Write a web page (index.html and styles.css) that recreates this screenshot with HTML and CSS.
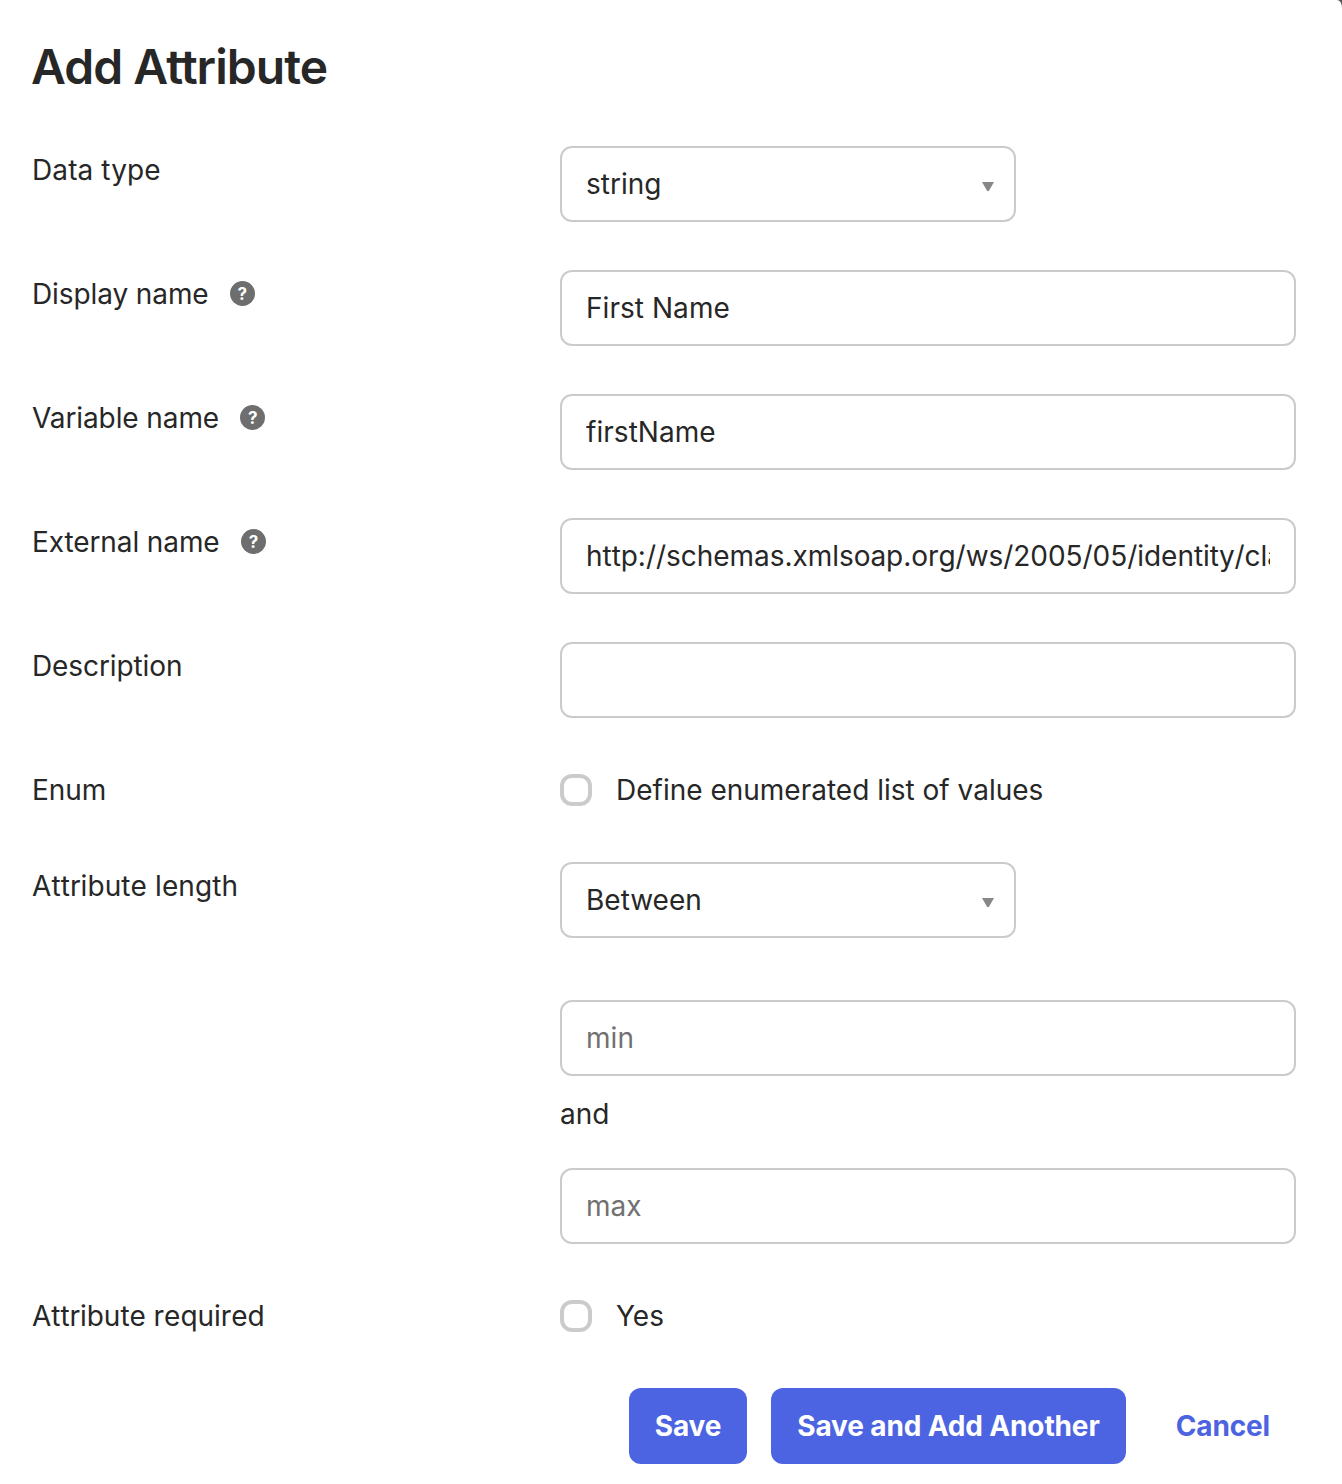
FILE: index.html
```html
<!DOCTYPE html>
<html lang="en">
<head>
<meta charset="utf-8">
<title>Add Attribute</title>
<link rel="stylesheet" href="styles.css">
</head>
<body>
<main class="dialog">
  <h1 class="title">Add Attribute</h1>
  <form class="form">
    <div class="row"><div class="label"><span class="loose">Data type</span></div><div class="select"><span>string</span><svg class="arrow" viewBox="0 0 12 9"><path d="M0 0h12L6.8 9H5.2z"/></svg></div></div>
    <div class="row"><div class="label">Display name <span class="help">?</span></div><input class="input" type="text" value="First Name"></div>
    <div class="row"><div class="label">Variable name <span class="help">?</span></div><input class="input" type="text" value="firstName"></div>
    <div class="row"><div class="label">External name <span class="help">?</span></div><input class="input url" type="text" value="http://schemas.xmlsoap.org/ws/2005/05/identity/claims/givenname"></div>
    <div class="row"><div class="label">Description</div><input class="input" type="text"></div>
    <div class="row"><div class="label">Enum</div><label class="check"><input class="box" type="checkbox"><span>Define enumerated list of values</span></label></div>
    <div class="row row-length"><div class="label"><span class="unkerned loose">Attribute length</span></div><div class="select"><span>Between</span><svg class="arrow" viewBox="0 0 12 9"><path d="M0 0h12L6.8 9H5.2z"/></svg></div></div>
    <div class="range"><input class="input" type="text" placeholder="min"><div class="and">and</div><input class="input" type="text" placeholder="max"></div>
    <div class="row"><div class="label"><span class="unkerned">Attribute required</span></div><label class="check"><input class="box" type="checkbox"><span>Yes</span></label></div>
    <div class="actions"><button class="button" type="button">Save</button><button class="button" type="button">Save and Add Another</button><button class="button link" type="button">Cancel</button></div>
  </form>
</main>
</body>
</html>
```
FILE: styles.css
```css
* { box-sizing: border-box; }
body {
  margin: 0;
  background: #555;
  font-family: Inter, sans-serif;
  font-size: 28px;
  line-height: 40px;
  color: #272727;
}
.dialog {
  height: 1484px;
  padding: 37px 46px 0 32px;
  overflow: hidden;
  background: #fff;
  border-top-right-radius: 5px 8px;
}
.title {
  margin: 0 0 49px -1px;
  font-size: 48px;
  line-height: 60px;
  font-weight: 600;
  letter-spacing: -0.96px;
}
.row {
  display: grid;
  grid-template-columns: 528px 1fr;
  align-items: start;
  margin-bottom: 48px;
}
.label {
  display: flex;
  align-items: center;
  padding-top: 4px;
  letter-spacing: -0.1px;
}
.unkerned { font-kerning: none; letter-spacing: -0.04px; }
.loose { letter-spacing: 0.1px; }
.help {
  width: 25px;
  height: 25px;
  margin: -1px 0 0 21.3px;
  border-radius: 50%;
  background: #6e6e6e;
  color: #fff;
  font-size: 17px;
  font-weight: 700;
  letter-spacing: 0;
  line-height: 26px;
  text-align: center;
}
.input, .select {
  width: 100%;
  height: 76px;
  padding: 0 24px;
  border: 2px solid #cbcbcb;
  border-radius: 12px;
  background: #fff;
  color: inherit;
  font: inherit;
  outline: none;
}
.input { display: block; letter-spacing: 0.05px; }
.input::placeholder { color: #717171; opacity: 1; }
.url { font-kerning: none; letter-spacing: -0.04px; }
.select {
  display: flex;
  align-items: center;
  justify-content: space-between;
  width: 456px;
  padding-right: 20px;
}
.arrow { width: 12px; height: 9px; margin-top: 5px; fill: #878787; }
.check { display: flex; align-items: center; gap: 24px; height: 48px; }
.box {
  appearance: none;
  width: 32px;
  height: 32px;
  margin: 0;
  border: 4px solid #cbcbcb;
  border-radius: 12px;
}
.row-length { margin-bottom: 62px; }
.range { margin: 0 0 48px 528px; }
.and { margin: 18px 0 34px; }
.actions { display: flex; justify-content: flex-end; gap: 24px; }
.button {
  height: 76px;
  padding: 0 26px;
  border: 0;
  border-radius: 12px;
  background: #4c64e1;
  color: #fff;
  font: 700 28px/40px Inter, sans-serif;
  letter-spacing: -0.14px;
}
.link { background: none; color: #4c64e1; }
```
